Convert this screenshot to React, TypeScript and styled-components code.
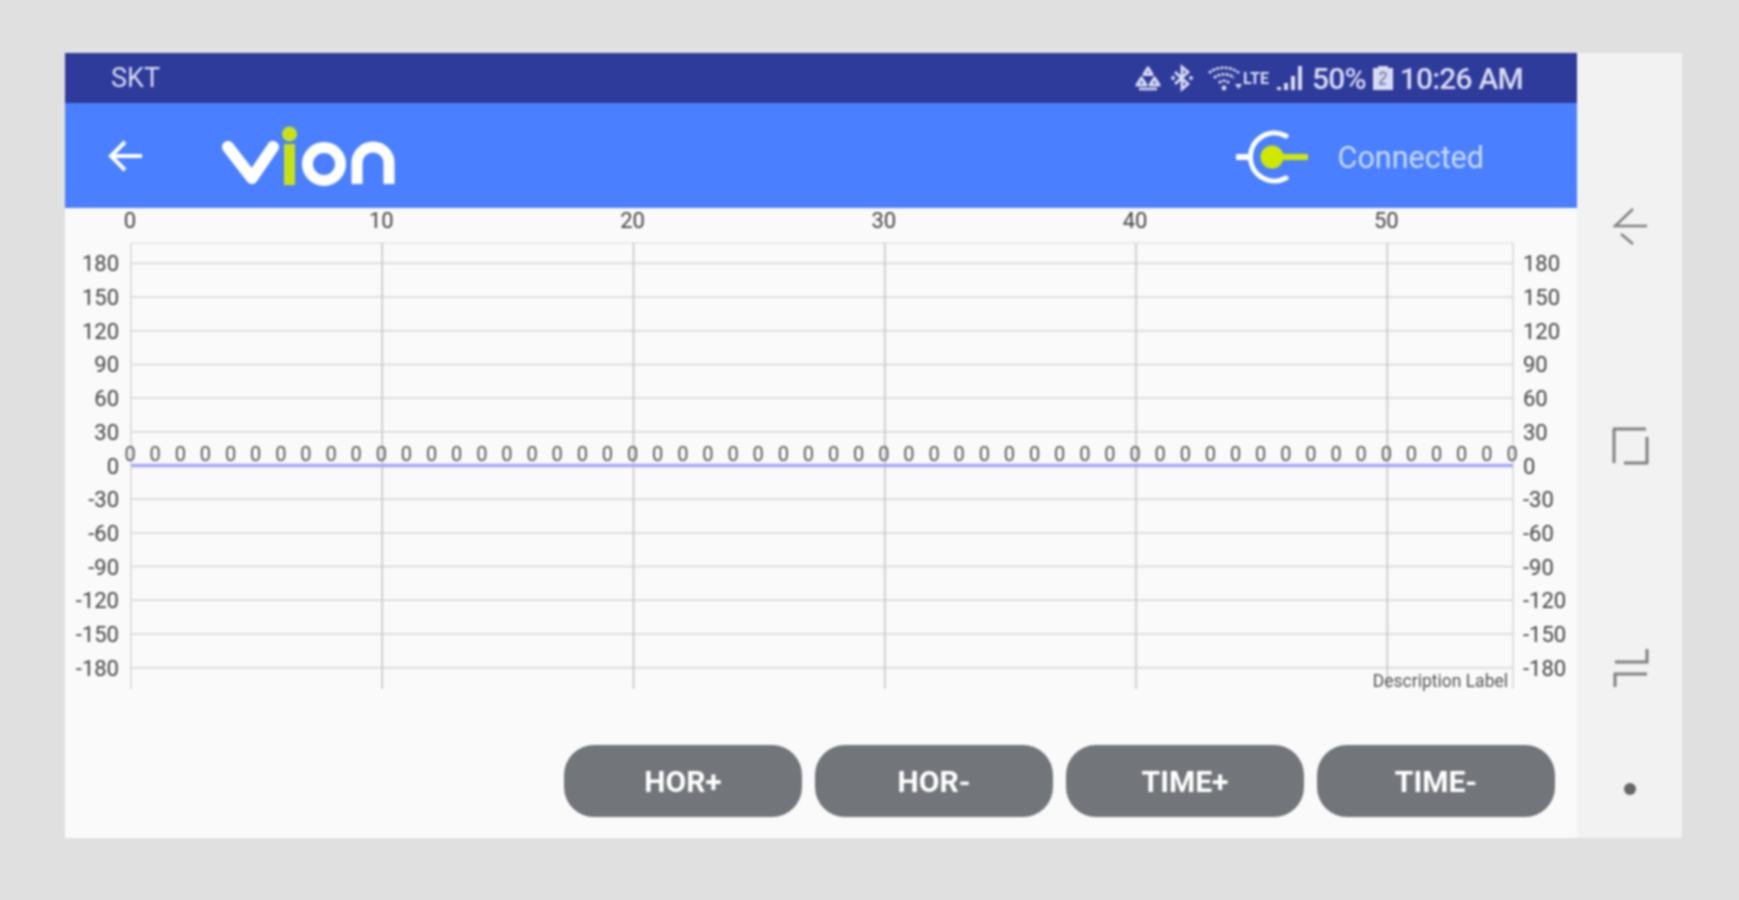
import React from 'react';
import styled, { createGlobalStyle } from 'styled-components';

const GlobalStyle = createGlobalStyle`
  html, body {
    margin: 0;
    padding: 0;
    height: 100%;
    background: #e0e0e0;
    font-family: Roboto, "Liberation Sans", sans-serif;
  }
`;

// chart geometry, relative to the top left of the chart svg
const PLOT_LEFT = 66;
const PLOT_RIGHT = 1448;
const PLOT_TOP = 35;
const PLOT_BOTTOM = 481;
const ZERO_Y = 257.5;
const STEP_Y = 33.7;
const STEP_X = (PLOT_RIGHT - PLOT_LEFT) / 55;

const yTicks = [180, 150, 120, 90, 60, 30, 0, -30, -60, -90, -120, -150, -180];
const xTicks = [0, 10, 20, 30, 40, 50];
const points = Array.from({ length: 56 }, (_, i) => i);

const yOf = (v: number) => ZERO_Y - (v / 30) * STEP_Y;
const xOf = (i: number) => PLOT_LEFT + i * STEP_X;

export default function App() {
  return (
    <Page>
      <GlobalStyle />
      <Device>
        <Screen>
          <StatusBar>
            <Carrier>SKT</Carrier>
            <StatusRight>
              <StatusIcon width="28" height="28" viewBox="0 0 28 28" $mr={8}>
                <path d="M14 4l4 6.500h-8zM7.500 14l4.500 7H3zM20.500 14l4.500 7h-9z" fill="none" stroke="#d9dcf0" strokeWidth="3.200" strokeLinejoin="round" />
                <path d="M5 25h18" stroke="#d9dcf0" strokeWidth="2.500" />
              </StatusIcon>
              <StatusIcon width="24" height="28" viewBox="0 0 24 28" $mr={13}>
                <path d="M5 8l13 12-6 5V3l6 5L5 20" fill="none" stroke="#d9dcf0" strokeWidth="2.800" />
                <circle cx="3" cy="14" r="2" fill="#d9dcf0" />
                <circle cx="21" cy="14" r="2" fill="#d9dcf0" />
              </StatusIcon>
              <StatusIcon width="36" height="28" viewBox="0 0 36 28" $mr={0}>
                <g fill="none" stroke="#d9dcf0" strokeWidth="2.600" strokeDasharray="3 1.200">
                  <path d="M2 9c8-7 22-7 30 0" />
                  <path d="M7 14c5-5 15-5 20 0" />
                  <path d="M12 19c3-3 7-3 10 0" />
                </g>
                <circle cx="17" cy="24" r="2.400" fill="#d9dcf0" />
                <path d="M28 20l3.500 5 3.500-5z" fill="#d9dcf0" />
              </StatusIcon>
              <LteMark>LTE</LteMark>
              <StatusIcon width="28" height="28" viewBox="0 0 28 28" $mr={8}>
                <g fill="#d9dcf0">
                  <rect x="1" y="23" width="4" height="3" />
                  <rect x="8" y="19" width="4" height="7" />
                  <rect x="15" y="12" width="4" height="14" />
                  <rect x="22" y="2" width="4" height="24" />
                </g>
              </StatusIcon>
              <StatusText>50%</StatusText>
              <StatusIcon width="22" height="28" viewBox="0 0 22 28" $mr={6} $ml={6}>
                <path d="M6 2h10v2h5v22H1V4h5z" fill="#d9dcf0" />
                <path d="M8 11c1-4 6-3 6 0 0 3-6 5-6 9h6" fill="none" stroke="#7d86c0" strokeWidth="2" />
              </StatusIcon>
              <StatusText>10:26 AM</StatusText>
            </StatusRight>
          </StatusBar>

          <AppBar>
            <BackIcon width="38" height="36" viewBox="0 0 38 36">
              <path d="M35 18H5M18 4L4 18l14 14" fill="none" stroke="#fff" strokeWidth="4" />
            </BackIcon>
            <Logo width="176" height="66" viewBox="0 0 176 66">
              <path d="M6 24l24 31 21-31" fill="none" stroke="#fff" strokeWidth="12" strokeLinejoin="round" strokeLinecap="round" />
              <rect x="62" y="21" width="11" height="41" fill="#c6e215" />
              <circle cx="67.500" cy="11" r="7.500" fill="#c6e215" />
              <circle cx="102" cy="41" r="16.500" fill="none" stroke="#fff" strokeWidth="11" />
              <path d="M135 61V40a16 16 0 0 1 32 0v21" fill="none" stroke="#fff" strokeWidth="11" />
            </Logo>
            <ConnectedGroup>
              <PlugIcon width="72" height="56" viewBox="0 0 72 56">
                <path d="M50 7A24 24 0 1 0 50 49" fill="none" stroke="#fff" strokeWidth="5" strokeLinecap="round" />
                <path d="M2 28h11" stroke="#fff" strokeWidth="6" strokeLinecap="round" />
                <circle cx="36" cy="28" r="11.500" fill="#d0e800" />
                <path d="M40 28h30" stroke="#d0e800" strokeWidth="6" strokeLinecap="round" />
              </PlugIcon>
              <ConnectedLabel>Connected</ConnectedLabel>
            </ConnectedGroup>
          </AppBar>

          <Content>
            <Chart width="1512" height="501" viewBox="0 0 1512 501">
              {yTicks.map((v) => (
                <line key={v} x1={PLOT_LEFT} x2={PLOT_RIGHT} y1={yOf(v)} y2={yOf(v)} stroke="#d6d6d6" strokeWidth="1.500" />
              ))}
              <line x1={PLOT_LEFT} x2={PLOT_RIGHT} y1={PLOT_TOP} y2={PLOT_TOP} stroke="#e4e4e4" strokeWidth="1.500" />
              {xTicks.map((t) => (
                <line key={t} x1={xOf(t)} x2={xOf(t)} y1={PLOT_TOP} y2={PLOT_BOTTOM} stroke={t === 0 ? '#d6d6d6' : '#c4c4c4'} strokeWidth="1.500" />
              ))}
              <line x1={PLOT_RIGHT} x2={PLOT_RIGHT} y1={PLOT_TOP} y2={PLOT_BOTTOM} stroke="#d6d6d6" strokeWidth="1.500" />
              <line x1={PLOT_LEFT} x2={PLOT_RIGHT} y1={ZERO_Y} y2={ZERO_Y} stroke="#a8a8fa" strokeWidth="3.500" />

              {xTicks.map((t) => (
                <AxisText key={t} x={xOf(t) - 1} y={20} textAnchor="middle">{t}</AxisText>
              ))}
              {yTicks.map((v) => (
                <AxisText key={v} x={54} y={yOf(v) + 8} textAnchor="end">{v}</AxisText>
              ))}
              {yTicks.map((v) => (
                <AxisText key={v} x={1458} y={yOf(v) + 8} textAnchor="start">{v}</AxisText>
              ))}
              {points.map((i) => (
                <ValueText key={i} x={xOf(i) - 1} y={253} textAnchor="middle">0</ValueText>
              ))}
              <DescriptionText x={1443} y={479} textAnchor="end">Description Label</DescriptionText>
            </Chart>

            <ButtonRow>
              <ControlButton>HOR+</ControlButton>
              <ControlButton>HOR-</ControlButton>
              <ControlButton>TIME+</ControlButton>
              <ControlButton>TIME-</ControlButton>
            </ButtonRow>
          </Content>
        </Screen>

        <NavBar>
          <NavIcon width="36" height="38" viewBox="0 0 36 38" $top={154}>
            <path d="M34 19H2L20 2M8 27l12 10" fill="none" stroke="#808080" strokeWidth="2.500" />
          </NavIcon>
          <NavIcon width="38" height="38" viewBox="0 0 38 38" $top={182}>
            <path d="M2 36V2h32" fill="none" stroke="#808080" strokeWidth="3" strokeLinejoin="round" />
            <path d="M35 10v26H12" fill="none" stroke="#808080" strokeWidth="3" strokeLinejoin="round" />
          </NavIcon>
          <NavIcon width="36" height="40" viewBox="0 0 36 40" $top={183}>
            <path d="M2 14h32V1M34 26H2v13" fill="none" stroke="#808080" strokeWidth="3" />
          </NavIcon>
          <NavDot />
        </NavBar>
      </Device>
    </Page>
  );
}

// Page Styles ---------------------------------------------------------
const Page = styled.div`
  width: 1739px;
  height: 900px;
  padding: 53px 0 0 65px;
  box-sizing: border-box;
  overflow: hidden;
  background: #e0e0e0;
`;

const Device = styled.div`
  display: flex;
  width: 1617px;
  height: 785px;
  filter: blur(0.9px);
`;

const Screen = styled.div`
  display: flex;
  flex-direction: column;
  width: 1512px;
  height: 100%;
  background: #fafafa;
`;

// Status Bar Styles ---------------------------------------------------
const StatusBar = styled.div`
  display: flex;
  align-items: center;
  justify-content: space-between;
  height: 50px;
  padding: 0 54px 0 46px;
  box-sizing: border-box;
  background: #2e3b9b;
  color: #d9dcf0;
`;

const Carrier = styled.span`
  font-size: 27px;
`;

const StatusRight = styled.div`
  display: flex;
  align-items: center;
`;

const StatusIcon = styled.svg<{ $mr: number; $ml?: number }>`
  display: block;
  margin-right: ${(p) => p.$mr}px;
  margin-left: ${(p) => p.$ml ?? 0}px;
`;

const StatusText = styled.span`
  font-size: 30px;
  font-weight: 500;
  letter-spacing: -0.8px;
`;

const LteMark = styled.span`
  align-self: flex-start;
  margin: 8px 7px 0 0;
  font-size: 16px;
  font-weight: 700;
`;

// App Bar Styles ------------------------------------------------------
const AppBar = styled.div`
  display: flex;
  align-items: center;
  height: 105px;
  padding-left: 42px;
  box-sizing: border-box;
  background: #4a80ff;
`;

const BackIcon = styled.svg`
  display: block;
`;

const Logo = styled.svg`
  display: block;
  margin: 1px 0 0 77px;
`;

const ConnectedGroup = styled.div`
  display: flex;
  align-items: center;
  margin-left: auto;
  padding: 3px 93px 0 0;
`;

const PlugIcon = styled.svg`
  display: block;
  margin-right: 30px;
`;

const ConnectedLabel = styled.span`
  color: #c9dbff;
  font-size: 30.5px;
`;

// Chart Styles --------------------------------------------------------
const Content = styled.div`
  display: flex;
  flex: 1;
  flex-direction: column;
`;

const Chart = styled.svg`
  display: block;
`;

const AxisText = styled.text`
  fill: #444;
  font-size: 22px;
  font-family: Roboto, sans-serif;
`;

const ValueText = styled.text`
  fill: #555;
  font-size: 20px;
  font-family: Roboto, sans-serif;
`;

const DescriptionText = styled.text`
  fill: #555;
  font-size: 17.5px;
  font-family: Roboto, sans-serif;
`;

// Button Styles -------------------------------------------------------
const ButtonRow = styled.div`
  display: flex;
  justify-content: flex-end;
  gap: 13px;
  margin-top: 36px;
  padding-right: 22px;
`;

const ControlButton = styled.button`
  width: 238px;
  height: 72px;
  border: none;
  border-radius: 30px;
  background: #72757a;
  color: #fff;
  font-family: Roboto, sans-serif;
  font-size: 30px;
  font-weight: 700;
`;

// Nav Bar Styles ------------------------------------------------------
const NavBar = styled.div`
  display: flex;
  flex-direction: column;
  align-items: center;
  width: 105px;
  background: #f2f2f2;
`;

const NavIcon = styled.svg<{ $top: number }>`
  display: block;
  margin: ${(p) => p.$top}px 0 0 3px;
`;

const NavDot = styled.div`
  width: 12px;
  height: 12px;
  margin-top: 95px;
  border-radius: 50%;
  background: #666;
`;
